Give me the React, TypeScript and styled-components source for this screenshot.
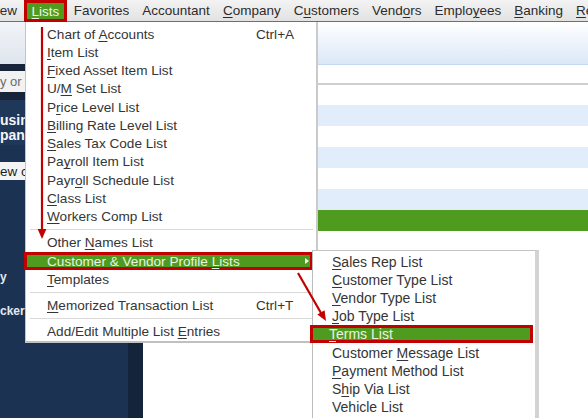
import React from 'react'
import styled, { createGlobalStyle } from 'styled-components'

type Entry =
  | { label: string; at?: number; shortcut?: string; active?: boolean; submenu?: boolean }
  | 'separator'

const topMenus = [
  { label: 'View', at: -1 },
  { label: 'Lists', at: 0, active: true },
  { label: 'Favorites' },
  { label: 'Accountant' },
  { label: 'Company', at: 0 },
  { label: 'Customers', at: 1 },
  { label: 'Vendors', at: 4 },
  { label: 'Employees', at: 5 },
  { label: 'Banking', at: 0 },
  { label: 'Reports', at: 0 },
]

const listsMenu: Entry[] = [
  { label: 'Chart of Accounts', at: 9, shortcut: 'Ctrl+A' },
  { label: 'Item List', at: 0 },
  { label: 'Fixed Asset Item List', at: 0 },
  { label: 'U/M Set List', at: 2 },
  { label: 'Price Level List', at: 1 },
  { label: 'Billing Rate Level List', at: 0 },
  { label: 'Sales Tax Code List', at: 0 },
  { label: 'Payroll Item List', at: 2 },
  { label: 'Payroll Schedule List', at: 4 },
  { label: 'Class List', at: 0 },
  { label: 'Workers Comp List', at: 0 },
  'separator',
  { label: 'Other Names List', at: 6 },
  { label: 'Customer & Vendor Profile Lists', at: 26, active: true, submenu: true },
  { label: 'Templates', at: 0 },
  'separator',
  { label: 'Memorized Transaction List', at: 0, shortcut: 'Ctrl+T' },
  'separator',
  { label: 'Add/Edit Multiple List Entries', at: 23 },
]

const profileLists: Entry[] = [
  { label: 'Sales Rep List', at: 0 },
  { label: 'Customer Type List', at: 0 },
  { label: 'Vendor Type List', at: 0 },
  { label: 'Job Type List', at: 0 },
  { label: 'Terms List', at: 0, active: true },
  { label: 'Customer Message List', at: 9 },
  { label: 'Payment Method List', at: 0 },
  { label: 'Ship Via List', at: 1 },
  { label: 'Vehicle List' },
]

// alternating register rows to the right of the sidebar
const registerRows: { height: number; tone: 'white' | 'blue' | 'green' }[] = [
  { height: 20, tone: 'white' },
  { height: 21, tone: 'blue' },
  { height: 21, tone: 'white' },
  { height: 21, tone: 'blue' },
  { height: 21, tone: 'white' },
  { height: 21, tone: 'blue' },
  { height: 21, tone: 'green' },
]

const GREEN = '#4f9b1f'
const RED = '#c20000'

const GlobalStyle = createGlobalStyle`
  html, body {
    margin: 0;
    padding: 0;
    background: #ffffff;
  }
  body {
    font-family: 'Liberation Sans', Arial, sans-serif;
  }
`

const Mnemonic = ({ text, at }: { text: string; at?: number }) =>
  at === undefined || at < 0 ? (
    <>{text}</>
  ) : (
    <>
      {text.slice(0, at)}
      <Key>{text[at]}</Key>
      {text.slice(at + 1)}
    </>
  )

const MenuItems = ({ entries, sub }: { entries: Entry[]; sub?: boolean }) => (
  <>
    {entries.map((entry, i) =>
      entry === 'separator' ? (
        <Separator key={i} />
      ) : (
        <MenuRow key={i} $active={!!entry.active} $sub={!!sub}>
          <span>
            <Mnemonic text={entry.label} at={entry.at} />
          </span>
          {entry.shortcut && <Shortcut>{entry.shortcut}</Shortcut>}
          {entry.submenu && <SubArrow />}
        </MenuRow>
      )
    )}
  </>
)

const App = () => (
  <>
    <GlobalStyle />
    <Screen>
      <MenuBar>
        {topMenus.map((m, i) => (
          <TopMenu key={m.label} $active={!!m.active} $lead={i === 0}>
            <Mnemonic text={m.label} at={m.at} />
          </TopMenu>
        ))}
      </MenuBar>

      <Workspace>
        <Sidebar>
          <SideHeader />
          <SearchBar>
            <SearchField>y or</SearchField>
          </SearchBar>
          <CompanyBlock>
            <div>usin</div>
            <div>pan</div>
          </CompanyBlock>
          <SnapshotBar>ew c</SnapshotBar>
          <NavList>
            <NavItem>y</NavItem>
            <NavItem>cker</NavItem>
          </NavList>
        </Sidebar>
        <SidebarEdge />
        <Main>
          <MainHeader />
          <FilterRow />
          {registerRows.map((r, i) => (
            <RegisterRow key={i} $height={r.height} $tone={r.tone} />
          ))}
        </Main>
      </Workspace>

      <ListsMenu>
        <MenuItems entries={listsMenu} />
      </ListsMenu>

      <ProfileMenu>
        <MenuItems entries={profileLists} sub />
      </ProfileMenu>

      <Callouts viewBox="0 0 588 418">
        <line x1="42" y1="27" x2="42" y2="231" stroke={RED} strokeWidth="2.2" />
        <polygon points="37.6,229 46.4,229 42,239" fill={RED} />
        <line x1="298" y1="273" x2="321" y2="313" stroke={RED} strokeWidth="2.2" />
        <polygon points="324.6,310.2 317.4,314.4 326,321" fill={RED} />
      </Callouts>
    </Screen>
  </>
)

const Screen = styled.div`
  position: relative;
  width: 588px;
  height: 418px;
  overflow: hidden;
  display: flex;
  flex-direction: column;
  background: #ffffff;
`

const MenuBar = styled.div`
  height: 21px;
  flex-shrink: 0;
  display: flex;
  align-items: stretch;
  white-space: nowrap;
  background: linear-gradient(#f3f3f3, #e2e2e2);
  border-bottom: 1px solid #6f6f6f;
  position: relative;
  z-index: 1;
`

const TopMenu = styled.div<{ $active: boolean; $lead: boolean }>`
  display: flex;
  align-items: center;
  box-sizing: border-box;
  padding: 0 6.5px;
  font-size: 13.5px;
  color: #2c2c2c;
  margin-left: ${({ $lead }) => ($lead ? '-18.5px' : '0')};

  ${({ $active }) =>
    $active &&
    `
    height: 22px;
    margin-bottom: -1px;
    padding: 0 5px;
    background: ${GREEN};
    color: #eef6e7;
    border: 3px solid ${RED};
  `}
`

const Key = styled.span`
  text-decoration: underline;
  text-decoration-thickness: 1px;
  text-underline-offset: 2px;
`

const Workspace = styled.div`
  flex: 1;
  display: flex;
  min-height: 0;
`

const Sidebar = styled.div`
  width: 128px;
  flex-shrink: 0;
  display: flex;
  flex-direction: column;
  background: #1c3253;
  white-space: nowrap;
  overflow: hidden;
`

const SidebarEdge = styled.div`
  width: 15px;
  flex-shrink: 0;
  background: #13243b;
`

const SideHeader = styled.div`
  height: 42px;
  background: linear-gradient(#f1f4f8, #dfe5ed);
`

const SearchBar = styled.div`
  padding: 7px 0 8px;
  background: #17253a;
`

const SearchField = styled.div`
  height: 21px;
  display: flex;
  align-items: center;
  background: #f2f2f2;
  color: #6a6a6a;
  font-size: 13px;
`

const CompanyBlock = styled.div`
  height: 45px;
  box-sizing: border-box;
  padding-top: 13px;
  background: #1f3759;
  color: #f4f6f9;
  font-size: 14px;
  font-weight: bold;
  line-height: 15px;
`

const SnapshotBar = styled.div`
  margin-top: 17px;
  height: 18px;
  display: flex;
  align-items: center;
  background: #f4f4f4;
  color: #1c1c1c;
  font-size: 13.5px;
`

const NavList = styled.div`
  padding-top: 80px;
  display: flex;
  flex-direction: column;
`

const NavItem = styled.div`
  height: 34px;
  display: flex;
  align-items: center;
  color: #e3e8ef;
  font-size: 12px;
  font-weight: bold;
`

const Main = styled.div`
  flex: 1;
  display: flex;
  flex-direction: column;
  background: #ffffff;
`

const MainHeader = styled.div`
  height: 42px;
  background: linear-gradient(#ffffff, #dbe7f7);
  border-bottom: 1px solid #c4d8f1;
`

const FilterRow = styled.div`
  height: 18px;
  background: #ffffff;
  border-bottom: 2px solid #cfcfcf;
`

const RegisterRow = styled.div<{ $height: number; $tone: 'white' | 'blue' | 'green' }>`
  height: ${({ $height }) => $height}px;
  background: ${({ $tone }) =>
    $tone === 'green' ? GREEN : $tone === 'blue' ? '#e2edfb' : '#ffffff'};
`

const ListsMenu = styled.div`
  position: absolute;
  left: 25px;
  top: 22px;
  width: 293px;
  box-sizing: border-box;
  padding-top: 3px;
  background: #ffffff;
  border-left: 1px solid #c4c4c4;
  border-right: 2px solid #cacaca;
  border-bottom: 2px solid #c0c0c0;
  z-index: 2;
`

const ProfileMenu = styled.div`
  position: absolute;
  left: 312px;
  top: 250px;
  width: 227px;
  box-sizing: border-box;
  padding: 2px 0 8px;
  background: #ffffff;
  border-left: 1px solid #bcbcbc;
  border-top: 1px solid #c4c4c4;
  border-right: 4px solid #d3d3d3;
  z-index: 3;
`

const MenuRow = styled.div<{ $active: boolean; $sub: boolean }>`
  height: ${({ $sub }) => ($sub ? '18.1px' : '18.25px')};
  box-sizing: border-box;
  display: flex;
  align-items: center;
  padding: ${({ $sub }) => ($sub ? '0 4px 0 19px' : '0 4px 0 21px')};
  font-size: ${({ $sub }) => ($sub ? '14px' : '13.6px')};
  color: #353535;
  white-space: nowrap;

  ${({ $active, $sub }) =>
    $active &&
    `
    background: ${GREEN};
    color: #eaf4e1;
    border: 3px solid ${RED};
    margin: ${$sub ? '0 2px 0 -3px' : '0 3px 0 -2px'};
    padding: ${$sub ? '0 1px 0 16px' : '0 1px 0 20px'};
  `}
`

const Shortcut = styled.span`
  margin-left: auto;
  width: 56px;
`

const SubArrow = styled.span`
  margin-left: auto;
  width: 0;
  height: 0;
  border-left: 4px solid #f1f7ec;
  border-top: 3.5px solid transparent;
  border-bottom: 3.5px solid transparent;
`

const Separator = styled.div`
  height: 8px;
  display: flex;
  align-items: center;
  padding: 0 3px 0 4px;

  &::after {
    content: '';
    flex: 1;
    border-top: 1px solid #d9d9d9;
  }
`

const Callouts = styled.svg`
  position: absolute;
  left: 0;
  top: 0;
  width: 588px;
  height: 418px;
  pointer-events: none;
  z-index: 4;
`

export default App
